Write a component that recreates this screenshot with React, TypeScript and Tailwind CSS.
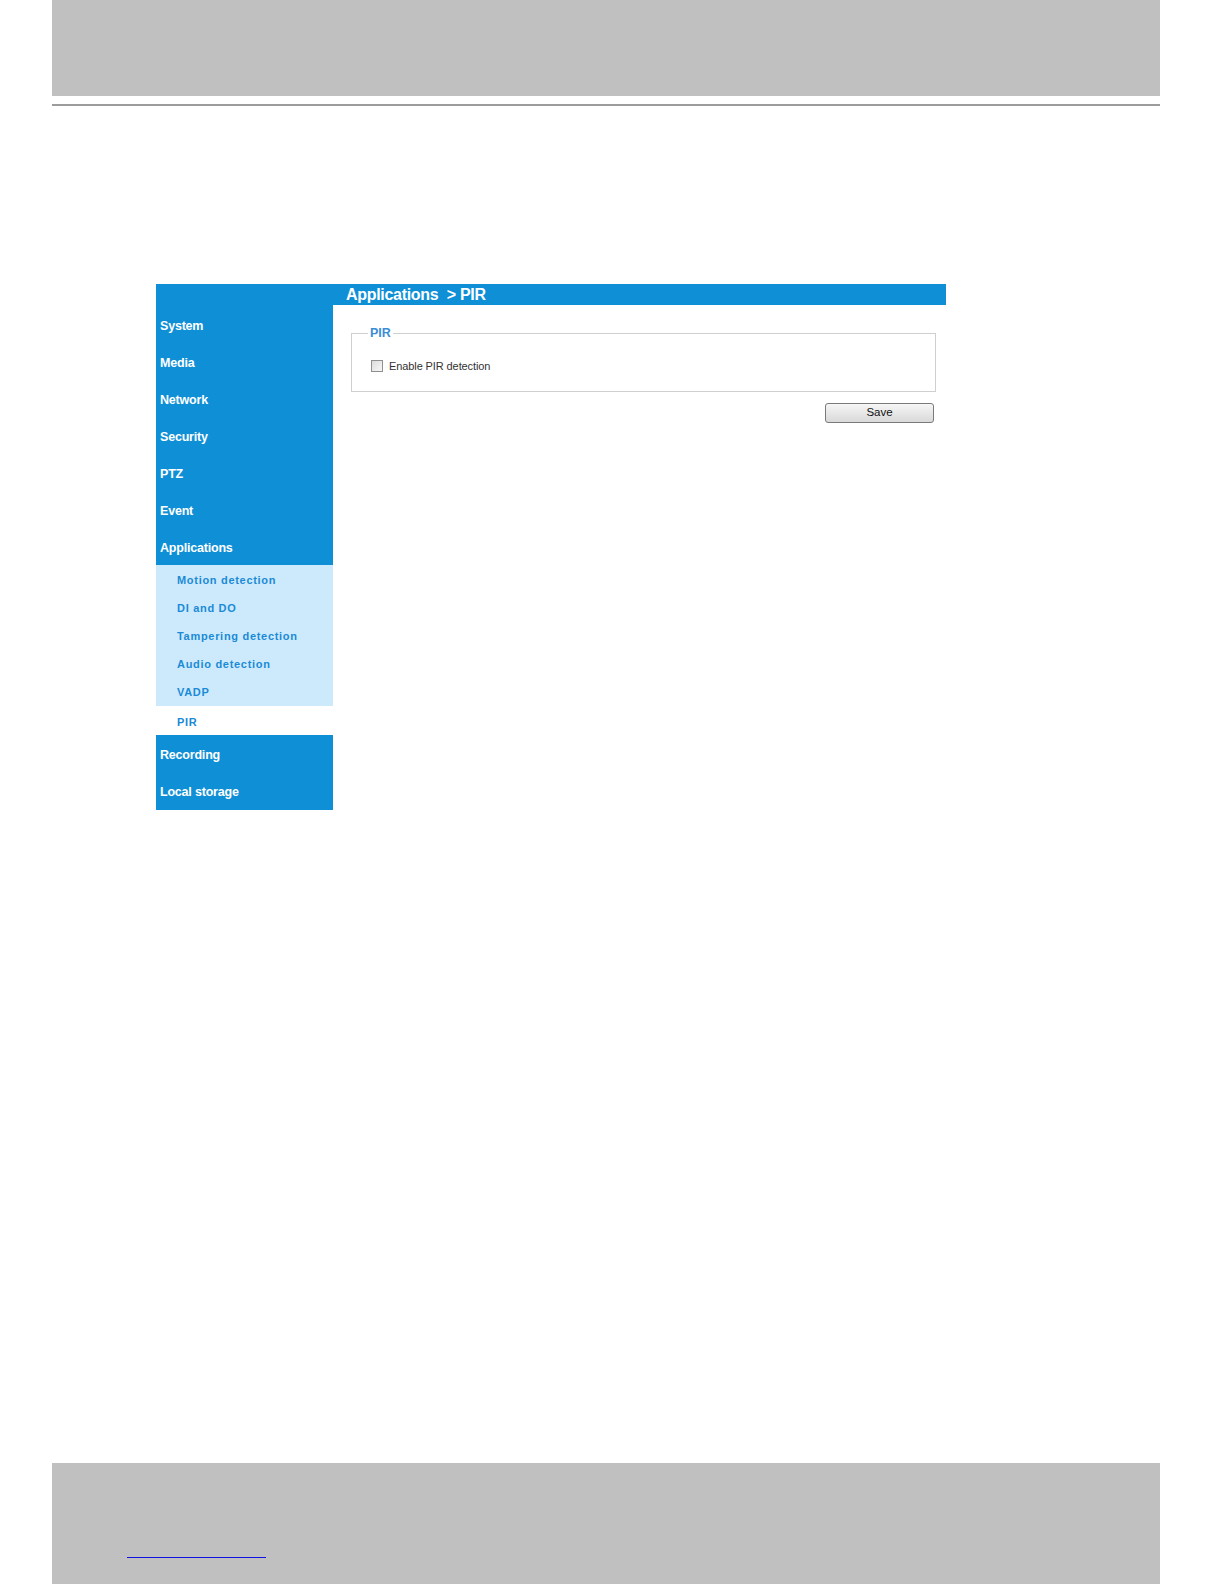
import React from "react";

const mainTop = ["System", "Media", "Network", "Security", "PTZ", "Event", "Applications"];
const subs = ["Motion detection", "DI and DO", "Tampering detection", "Audio detection", "VADP"];
const mainBottom = ["Recording", "Local storage"];

function MainItem({ label }: { label: string }) {
  return (
    <div className="h-[37px] flex items-center pt-[4px] pl-[4px] text-white font-bold text-[12.5px] tracking-[-0.2px]">
      {label}
    </div>
  );
}

function SubItem({ label }: { label: string }) {
  return (
    <div className="h-[28px] flex items-center pt-[2px] pl-[21px] text-[#1a8ad6] font-bold text-[11px] tracking-[0.7px]">
      {label}
    </div>
  );
}

export default function App() {
  return (
    <div
      className="w-[1224px] h-[1584px] bg-white relative flex flex-col"
      style={{ fontFamily: '"Liberation Sans", Arial, sans-serif' }}
    >
      <div className="mx-[52px] w-[1108px] h-[96px] bg-[#c0c0c0]" />
      <div className="mx-[52px] w-[1108px] h-[2px] bg-[#9c9c9c] mt-[8px]" />

      <div className="ml-[156px] mt-[178px] w-[790px] flex flex-col">
        <div className="h-[21px] bg-[#0f8fd6] flex items-center pl-[190px] text-white font-bold text-[16px] tracking-[-0.3px] whitespace-pre">
          {"Applications  > PIR"}
        </div>
        <div className="flex">
          <div className="w-[177px] flex flex-col">
            <div className="bg-[#0f8fd6] pt-[1px]">
              {mainTop.map((l) => (
                <MainItem key={l} label={l} />
              ))}
            </div>
            <div className="bg-[#cdeafc] pb-[1px]">
              {subs.map((l) => (
                <SubItem key={l} label={l} />
              ))}
            </div>
            <div className="h-[29px] bg-white flex items-center pt-[3px] pl-[21px] text-[#1a8ad6] font-bold text-[11px] tracking-[0.7px]">
              PIR
            </div>
            <div className="bg-[#0f8fd6] pb-[1px]">
              {mainBottom.map((l) => (
                <MainItem key={l} label={l} />
              ))}
            </div>
          </div>
          <div className="flex-1 pl-[18px] pr-[10px] pt-[21px]">
            <fieldset className="border border-[#cfcfcf] h-[66px] px-[16px] m-0">
              <legend className="px-[2px] text-[#3a8dd6] font-bold text-[12.5px] leading-[14px]">PIR</legend>
              <div className="flex items-center mt-[18px] ml-[3px]">
                <span className="w-[12px] h-[12px] border border-[#8f8f8f] bg-gradient-to-br from-[#dcdcdc] to-[#f7f7f7] block" />
                <span className="ml-[6px] text-[11px] text-[#333] tracking-[-0.1px]">Enable PIR detection</span>
              </div>
            </fieldset>
            <div className="flex justify-end mt-[11px] pr-[2px]">
              <button className="w-[109px] h-[20px] border border-[#7a7a7a] rounded-[3px] bg-gradient-to-b from-[#f6f6f6] to-[#d9d9d9] text-[11.5px] text-[#111] leading-none">
                Save
              </button>
            </div>
          </div>
        </div>
      </div>

      <div className="absolute left-[52px] top-[1463px] w-[1108px] h-[121px] bg-[#c0c0c0]">
        <div className="absolute left-[75px] top-[94px] w-[139px] h-[1px] bg-[#1010e0]" />
      </div>
    </div>
  );
}
